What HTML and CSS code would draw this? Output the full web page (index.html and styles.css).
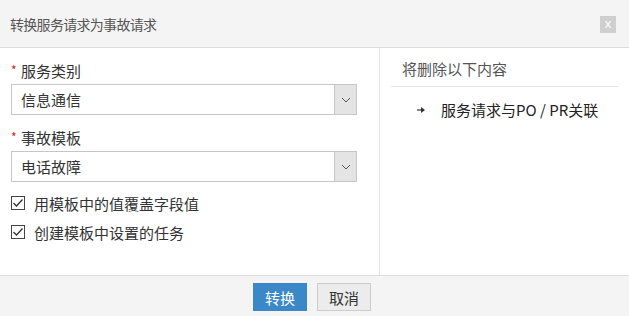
FILE: index.html
```html
<!DOCTYPE html>
<html lang="zh">
<head>
    <title>转换服务请求为事故请求</title>
    <link rel="stylesheet" href="styles.css">
</head>
<body>
    <div class="dialog">
        <div class="header">
            <span class="title">转换服务请求为事故请求</span>
            <span class="close">x</span>
        </div>
        <div class="content">
            <div class="left">
                <div class="label"><span class="req">*</span>服务类别</div>
                <div class="select">
                    <span class="value">信息通信</span>
                    <span class="arrow"><svg width="10" height="6" viewBox="0 0 10 6"><path d="M1 1 L5 5 L9 1" fill="none" stroke="#555" stroke-width="1"/></svg></span>
                </div>
                <div class="label"><span class="req">*</span>事故模板</div>
                <div class="select">
                    <span class="value">电话故障</span>
                    <span class="arrow"><svg width="10" height="6" viewBox="0 0 10 6"><path d="M1 1 L5 5 L9 1" fill="none" stroke="#555" stroke-width="1"/></svg></span>
                </div>
                <div class="check first">
                    <span class="box"><svg width="12" height="10" viewBox="0 0 12 10"><path d="M1.5 5 L4.5 8 L10.5 1.5" fill="none" stroke="#333" stroke-width="1.3"/></svg></span>
                    用模板中的值覆盖字段值
                </div>
                <div class="check">
                    <span class="box"><svg width="12" height="10" viewBox="0 0 12 10"><path d="M1.5 5 L4.5 8 L10.5 1.5" fill="none" stroke="#333" stroke-width="1.3"/></svg></span>
                    创建模板中设置的任务
                </div>
            </div>
            <div class="right">
                <div class="right-title">将删除以下内容</div>
                <div class="item">
                    <span class="bullet"><svg width="9" height="8" viewBox="0 0 9 8"><path d="M0 4 H7" stroke="#333" stroke-width="1.2"/><path d="M4 1 L8 4 L4 7 Z" fill="#333"/></svg></span>
                    服务请求与PO / PR关联
                </div>
            </div>
        </div>
        <div class="footer">
            <button class="btn primary">转换</button>
            <button class="btn">取消</button>
        </div>
    </div>
</body>
</html>
```

FILE: styles.css
```css
body {
    margin: 0;
    padding: 0;
    font-family: "Noto Sans CJK SC", "Liberation Sans", sans-serif;
    font-size: 15px;
    color: #333;
    background: #fff;
    overflow: hidden;
}
.dialog {
    width: 629px;
    display: flex;
    flex-direction: column;
}
.header {
    height: 47px;
    background: #f4f4f4;
    border-bottom: 1px solid #dcdcdc;
    display: flex;
    align-items: center;
    justify-content: space-between;
    padding: 0 13px 0 10px;
}
.title {
    font-size: 14px;
    color: #555;
    letter-spacing: -0.7px;
}
.close {
    width: 16px;
    height: 17px;
    background: #cfcfcf;
    color: #fff;
    font-family: "Liberation Sans", sans-serif;
    font-size: 13px;
    line-height: 16px;
    text-align: center;
    margin-top: 2px;
}
.content {
    height: 227px;
    display: flex;
}
.left {
    width: 380px;
    border-right: 1px solid #e4e4e4;
    padding: 11px 0 0 11px;
    box-sizing: border-box;
}
.label {
    height: 25px;
    line-height: 24px;
    color: #333;
}
.req {
    color: #e02020;
    font-size: 12px;
    display: inline-block;
    width: 10px;
    vertical-align: top;
    line-height: 22px;
}
.select {
    width: 346px;
    height: 31px;
    box-sizing: border-box;
    border: 1px solid #c6c6c6;
    display: flex;
    align-items: center;
    justify-content: space-between;
    margin-bottom: 11px;
}
.value {
    padding-left: 9px;
    color: #333;
}
.arrow {
    width: 21px;
    height: 29px;
    background: #e4e4e4;
    border-left: 1px solid #c6c6c6;
    display: flex;
    align-items: center;
    justify-content: center;
}
.check {
    display: flex;
    align-items: center;
    height: 20px;
    margin-bottom: 9px;
}
.check.first {
    margin-top: 3px;
}
.box {
    width: 14px;
    height: 14px;
    border: 1px solid #444;
    box-sizing: border-box;
    margin-right: 9px;
    display: flex;
    align-items: center;
    justify-content: center;
}
.right {
    flex: 1;
    padding: 11px 11px 0 11px;
}
.right-title {
    height: 27px;
    line-height: 20px;
    padding-left: 11px;
    color: #555;
    border-bottom: 1px solid #e4e4e4;
}
.item {
    margin-top: 12px;
    padding-left: 26px;
    display: flex;
    align-items: center;
    color: #222;
}
.bullet {
    width: 24px;
    display: flex;
    align-items: center;
}
.footer {
    height: 48px;
    background: #f4f4f4;
    border-top: 1px solid #dcdcdc;
    display: flex;
    justify-content: center;
    align-items: flex-start;
    gap: 10px;
    padding: 7px 5px 0 0;
}
.btn {
    width: 54px;
    height: 28px;
    font-family: inherit;
    font-size: 15px;
    border: 1px solid #cccccc;
    background: #ececec;
    color: #333;
    padding: 0;
}
.btn.primary {
    background: #3b88c9;
    border-color: #3b88c9;
    color: #fff;
}
```
